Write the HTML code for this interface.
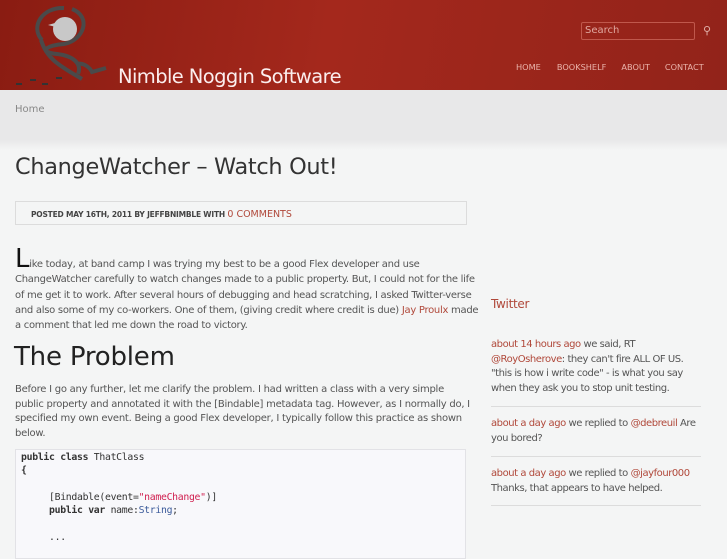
<!DOCTYPE html>
<html><head><meta charset="utf-8"><style>
*{margin:0;padding:0;box-sizing:border-box}
body{width:727px;height:545px;overflow:hidden;background:#f4f5f5;font-family:"DejaVu Sans",sans-serif;color:#444;font-size:10px;position:relative}
a{color:#b0483a;text-decoration:none}
#hdr{position:absolute;left:0;top:0;width:727px;height:90px;background:linear-gradient(100deg,#8a1c12 0%,#a4281c 45%,#92231a 100%)}
#crumb{position:absolute;left:0;top:90px;width:727px;height:60px;background:linear-gradient(#e8e8e9 0,#e8e8e9 50px,#f4f5f5 60px)}
.abs{position:absolute}
</style></head><body>
<div id="hdr">
<svg class="abs" style="left:12px;top:2px" width="100" height="86" viewBox="0 0 100 86">
<path d="M60 7 C80 15 72 38 52 42 C35 43 25 50 45 52 C62 54 70 62 66 72 M30 38 C18 25 30 5 52 6" fill="none" stroke="#4a4a4a" stroke-width="4"/>
<path d="M29 38 C35 58 50 65 70 77 M64 62 C72 60 78 66 80 70 L94 66" fill="none" stroke="#4a4a4a" stroke-width="4"/>
<circle cx="53" cy="27" r="12" fill="#c8c8c8"/>
<path d="M36 23 L50 19 L48 26Z" fill="#c8c8c8"/>
<path d="M4 82h6M18 78h6M30 82h6M44 76h6" stroke="#333" stroke-width="2"/>
</svg>
<div class="abs" style="left:118px;top:65px;font-size:19.5px;color:#fbeeee;letter-spacing:-0.6px">Nimble Noggin Software</div>
<div class="abs" style="left:581px;top:22px;width:114px;height:18px;border:1px solid #c0584c;border-radius:2px;color:#e0a8a0;font-size:10px;padding:2px 3px">Search</div>
<div class="abs" style="left:703px;top:24px;color:#e0b0a8;font-size:11px">⚲</div>
<div class="abs" style="left:516px;top:62px;font-size:8.2px;color:#eab4ab;letter-spacing:0">HOME<span style="margin-left:16px">BOOKSHELF</span><span style="margin-left:15px">ABOUT</span><span style="margin-left:15px">CONTACT</span></div>
</div>
<div id="crumb"><div class="abs" style="left:15px;top:14px;color:#888;font-size:10px">Home</div></div>
<div class="abs" style="left:15px;top:154px;font-size:22.4px;color:#333;letter-spacing:-0.3px">ChangeWatcher – Watch Out!</div>
<div class="abs" style="left:15px;top:201px;width:452px;height:24px;border:1px solid #dcdcdc;padding:7px 15px;font-size:7.5px;font-weight:bold;color:#444;letter-spacing:-0.2px">POSTED MAY 16TH, 2011 BY JEFFBNIMBLE WITH <a style="font-weight:normal;font-size:9.5px;letter-spacing:0">0 COMMENTS</a></div>
<div class="abs" style="left:15px;top:254px;width:465px;line-height:15.3px;font-size:10px;color:#555;letter-spacing:-0.28px"><span style="font-size:26px;color:#111;line-height:10px">L</span>ike today, at band camp I was trying my best to be a good Flex developer and use ChangeWatcher carefully to watch changes made to a public property. But, I could not for the life of me get it to work. After several hours of debugging and head scratching, I asked Twitter-verse and also some of my co-workers. One of them, (giving credit where credit is due) <a>Jay Proulx</a> made a comment that led me down the road to victory.</div>
<div class="abs" style="left:14px;top:342px;font-size:26px;color:#222;letter-spacing:-0.2px">The Problem</div>
<div class="abs" style="left:15px;top:383px;width:455px;line-height:14.5px;font-size:10px;color:#555;letter-spacing:-0.25px">Before I go any further, let me clarify the problem. I had written a class with a very simple public property and annotated it with the [Bindable] metadata tag. However, as I normally do, I specified my own event. Being a good Flex developer, I typically follow this practice as shown below.</div>
<div class="abs" style="left:15px;top:449px;width:451px;height:110px;background:#f8f8fb;border:1px solid #e2e2e6;padding:1px 5px;font-family:'DejaVu Sans Mono',monospace;font-size:9.8px;line-height:13.3px;color:#333;white-space:pre;letter-spacing:-0.3px"><b>public class</b> ThatClass
<b>{</b>

     [Bindable(event=<span style="color:#d02050">"nameChange"</span>)]
     <b>public var</b> name:<span style="color:#3a5a9a">String</span>;

     ...</div>
<div class="abs" style="left:491px;top:297px;font-size:12px;color:#b0483a;letter-spacing:-0.3px">Twitter</div>
<div class="abs" style="left:491px;top:338px;width:210px;line-height:14.5px;color:#555;font-size:10px;letter-spacing:-0.45px">
<div style="border-bottom:1px solid #dcdcdc;padding-bottom:10px"><a>about 14 hours ago</a> we said, RT <a>@RoyOsherove</a>: they can't fire ALL OF US. "this is how i write code" - is what you say when they ask you to stop unit testing.</div>
<div style="border-bottom:1px solid #dcdcdc;padding:10px 0 10px"><a>about a day ago</a> we replied to <a>@debreuil</a> Are you bored?</div>
<div style="border-bottom:1px solid #dcdcdc;padding:10px 0 9px"><a>about a day ago</a> we replied to <a>@jayfour000</a> Thanks, that appears to have helped.</div>
</div>
</body></html>
